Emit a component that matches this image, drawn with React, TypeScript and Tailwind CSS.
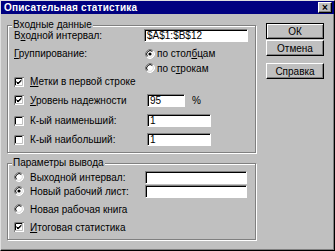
import type { ReactNode } from 'react'

function CheckBox({ checked }: { checked?: boolean }) {
  return (
    <svg width="10" height="10" viewBox="0 0 10 10" className="shrink-0">
      <rect x="0" y="0" width="10" height="10" fill="#ffffff" />
      <path d="M0.5 10V0.5H10" stroke="#808080" fill="none" />
      <path d="M1.5 9V1.5H9" stroke="#000000" fill="none" />
      <path d="M1 8.5H8.5V1" stroke="#c0c0c0" fill="none" />
      {checked && <path d="M2.5 4.5L4 6L7.5 2.8M2.5 5.5L4 7L7.5 3.8" stroke="#000000" fill="none" />}
    </svg>
  )
}

function Radio({ checked }: { checked?: boolean }) {
  return (
    <svg width="10" height="10" viewBox="0 0 10 10" className="shrink-0">
      <circle cx="5" cy="5" r="4" fill="#ffffff" />
      <path d="M1.82 8.18A4.5 4.5 0 0 1 8.18 1.82" stroke="#808080" fill="none" />
      <path d="M8.18 1.82A4.5 4.5 0 0 1 1.82 8.18" stroke="#ffffff" fill="none" />
      <path d="M2.53 7.47A3.5 3.5 0 0 1 7.47 2.53" stroke="#000000" fill="none" />
      <path d="M7.47 2.53A3.5 3.5 0 0 1 2.53 7.47" stroke="#dfdfdf" fill="none" />
      {checked && <circle cx="5" cy="5" r="1.6" fill="#000000" />}
    </svg>
  )
}

function Field({ value, className }: { value?: string; className: string }) {
  return (
    <div
      className={`h-[13px] bg-white border border-t-[#808080] border-l-[#808080] border-b-white border-r-white shadow-[inset_1px_1px_0_#000] pl-[2px] pt-[1px] leading-[10px] ${className}`}
    >
      {value}
    </div>
  )
}

function Button({ children, isDefault }: { children: ReactNode; isDefault?: boolean }) {
  return (
    <div
      className={`flex items-center justify-center bg-[#c0c0c0] ${
        isDefault
          ? 'h-[16px] border border-black shadow-[inset_1px_1px_0_#fff,inset_-1px_-1px_0_#808080]'
          : 'h-[16px] border border-t-white border-l-white border-b-black border-r-black shadow-[inset_-1px_-1px_0_#808080]'
      }`}
    >
      {children}
    </div>
  )
}

function Group({ title, children, className }: { title: string; children: ReactNode; className: string }) {
  return (
    <div
      className={`relative border border-[#808080] shadow-[1px_1px_0_#fff,inset_1px_1px_0_#fff] ${className}`}
    >
      <span className="absolute -top-[7px] left-[4px] bg-[#c0c0c0] px-[1px] leading-[12px]">{title}</span>
      {children}
    </div>
  )
}

export default function App() {
  return (
    <div
      className="w-[335px] h-[251px] bg-[#c0c0c0] border border-t-[#dfdfdf] border-l-[#dfdfdf] border-b-black border-r-black shadow-[inset_-1px_-1px_0_#808080] text-black text-[10px] overflow-hidden"
      style={{ fontFamily: '"Liberation Sans", Arial, sans-serif' }}
    >
      {/* Title bar */}
      <div className="h-[13px] bg-[#000080] flex items-center justify-between pl-[3px] pr-[2px]">
        <span className="text-white font-bold text-[10px] leading-none tracking-[0.2px]">Описательная статистика</span>
        <div className="w-[14px] h-[11px] bg-[#c0c0c0] border border-t-white border-l-white border-b-black border-r-black shadow-[inset_-1px_-1px_0_#808080] flex items-center justify-center text-[10px] font-bold leading-none">
          ×
        </div>
      </div>

      <div className="flex">
        {/* Left column */}
        <div className="pl-[6px] w-[255px]">
          <Group title="Входные данные" className="mt-[11px] h-[128px] pt-0 pb-[3px]">
            <div className="flex items-center h-[19px] pl-[6px]">
              <span className="w-[130px]">В<u>х</u>одной интервал:</span>
              <Field value="$A$1:$B$12" className="w-[104px]" />
            </div>
            <div className="flex items-center h-[17px] pl-[6px]">
              <span className="w-[131px]"><u>Г</u>руппирование:</span>
              <Radio checked />
              <span className="ml-[2px]">по стол<u>б</u>цам</span>
            </div>
            <div className="flex items-center h-[12px] pl-[137px]">
              <Radio />
              <span className="ml-[2px]">по с<u>т</u>рокам</span>
            </div>
            <div className="flex items-center h-[15px] pl-[6px]">
              <CheckBox checked />
              <span className="ml-[6px]"><u>М</u>етки в первой строке</span>
            </div>
            <div className="flex items-center h-[22px] pl-[6px]">
              <CheckBox checked />
              <span className="ml-[6px] w-[117px]"><u>У</u>ровень надежности</span>
              <Field value="95" className="w-[38px]" />
              <span className="ml-[7px]">%</span>
            </div>
            <div className="flex items-center h-[19px] pl-[6px]">
              <CheckBox />
              <span className="ml-[6px] w-[117px]">К-ый наименьший:</span>
              <Field value="1" className="w-[64px]" />
            </div>
            <div className="flex items-center h-[19px] pl-[6px]">
              <CheckBox />
              <span className="ml-[6px] w-[117px]">К-ый наибольший:</span>
              <Field value="1" className="w-[64px]" />
            </div>
          </Group>

          <Group title="Параметры вывода" className="mt-[10px] h-[77px] pt-[6px] pb-[4px]">
            <div className="flex items-center h-[14px] pl-[6px]">
              <Radio />
              <span className="ml-[6px] w-[115px]">Выходной интервал:</span>
              <Field className="w-[102px]" />
            </div>
            <div className="flex items-center h-[14px] pl-[6px]">
              <Radio checked />
              <span className="ml-[6px] w-[115px]">Новый рабочий лист:</span>
              <Field className="w-[102px]" />
            </div>
            <div className="flex items-center h-[22px] pl-[6px]">
              <Radio />
              <span className="ml-[6px]">Новая рабочая книга</span>
            </div>
            <div className="flex items-center h-[14px] pl-[6px]">
              <CheckBox checked />
              <span className="ml-[6px]"><u>И</u>тоговая статистика</span>
            </div>
          </Group>
        </div>

        {/* Buttons */}
        <div className="ml-[10px] w-[58px] flex flex-col">
          <div className="mt-[9px]">
            <Button isDefault>ОК</Button>
          </div>
          <div className="mt-[1px]">
            <Button>Отмена</Button>
          </div>
          <div className="mt-[7px]">
            <Button>Справка</Button>
          </div>
        </div>
      </div>
    </div>
  )
}
